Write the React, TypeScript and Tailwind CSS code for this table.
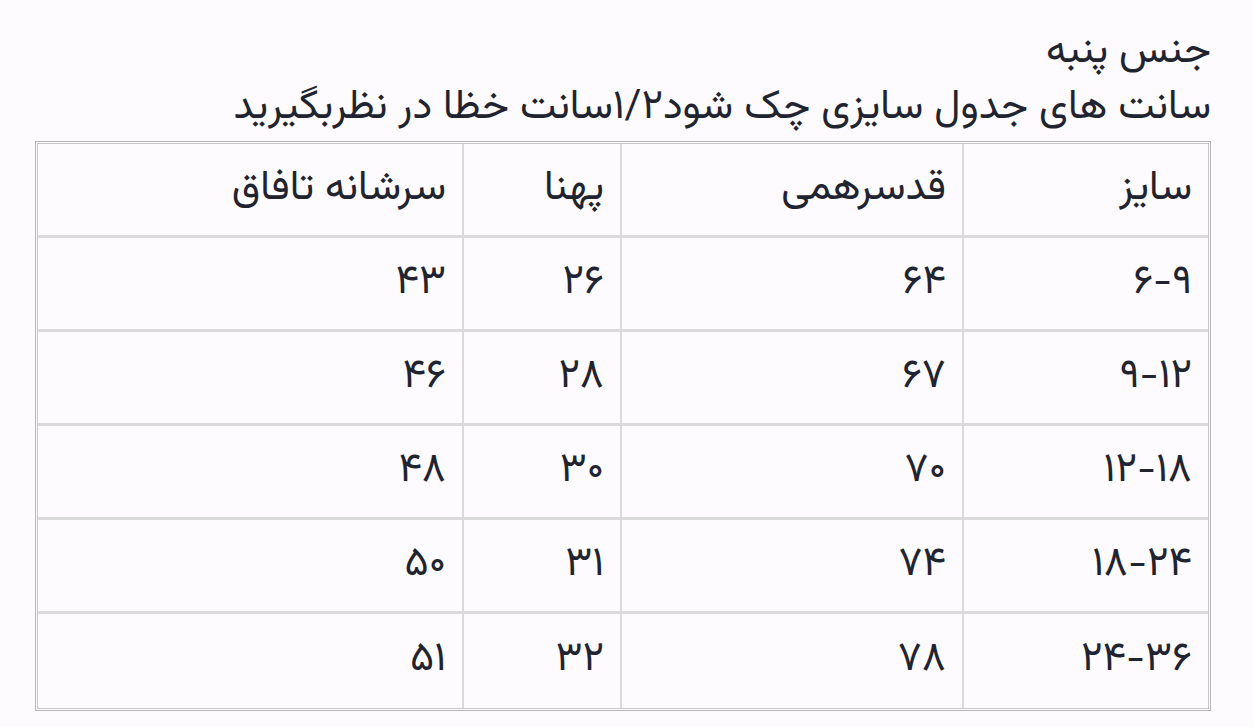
import React from "react";

const header = ["سایز", "قدسرهمی", "پهنا", "سرشانه تافاق"];
const rows = [
  ["۶-۹", "۶۴", "۲۶", "۴۳"],
  ["۹-۱۲", "۶۷", "۲۸", "۴۶"],
  ["۱۲-۱۸", "۷۰", "۳۰", "۴۸"],
  ["۱۸-۲۴", "۷۴", "۳۱", "۵۰"],
  ["۲۴-۳۶", "۷۸", "۳۲", "۵۱"],
];

function Row({ cells, last }: { cells: string[]; last: boolean }) {
  return (
    <div
      className={
        "grid grid-cols-[246px_342px_158px_1fr] h-[94px] " +
        (last ? "" : "border-b-[3px] border-[#dadada]")
      }
    >
      {cells.map((c, i) => (
        <div
          key={i}
          className={
            "flex items-center pr-[16px] " +
            (i < 3 ? "border-l-2 border-[#dadada]" : "")
          }
        >
          {c}
        </div>
      ))}
    </div>
  );
}

export default function App() {
  const all = [header, ...rows];
  return (
    <div
      dir="rtl"
      className="w-[1253px] h-[727px] overflow-hidden bg-[#fdfbfd] text-[#1f2430] pr-[42px] pl-[35px] pt-[24px]"
      style={{ fontFamily: '"Vazirmatn", "Noto Sans Arabic", "DejaVu Sans", sans-serif' }}
    >
      <div className="text-[41px] leading-[56px]">جنس پنبه</div>
      <div className="text-[41px] leading-[56px]">
        سانت های جدول سایزی چک شود۱/۲سانت خظا در نظربگیرید
      </div>
      <div className="mt-[5px] border border-[#b5b5b5] p-px">
        <div className="border border-[#c8c8c8] text-[41px]">
          {all.map((r, i) => (
            <Row key={i} cells={r} last={i === all.length - 1} />
          ))}
        </div>
      </div>
    </div>
  );
}
